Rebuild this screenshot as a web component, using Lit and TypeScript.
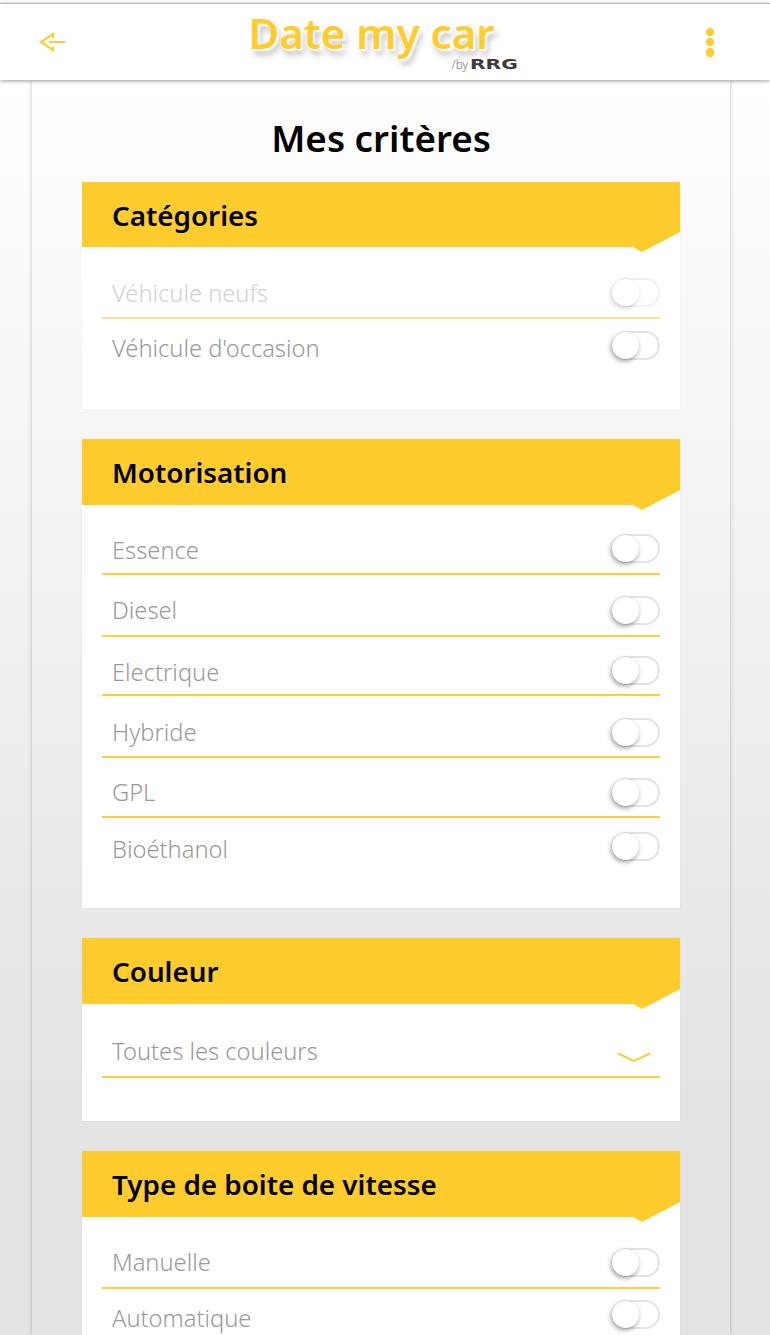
import { LitElement, html, css } from "lit";
import { customElement } from "lit/decorators.js";

// h: row height, t: space above the label, s: space above the switch
type Row = { label: string; faded?: boolean; h: number; t: number; s: number };
type Card = { title: string; head: number; rows: Row[] };
const cards: Card[] = [
  { title: "Catégories", head: 65, rows: [
    { label: "Véhicule neufs", faded: true, h: 72, t: 30, s: 31 },
    { label: "Véhicule d'occasion", h: 90, t: 13, s: 12 },
  ] },
  { title: "Motorisation", head: 66, rows: [
    { label: "Essence", h: 70, t: 29, s: 29 },
    { label: "Diesel", h: 62, t: 19, s: 21 },
    { label: "Electrique", h: 59, t: 19, s: 19 },
    { label: "Hybride", h: 62, t: 20, s: 22 },
    { label: "GPL", h: 60, t: 18, s: 20 },
    { label: "Bioéthanol", h: 90, t: 15, s: 14 },
  ] },
  { title: "Type de boite de vitesse", head: 66, rows: [
    { label: "Manuelle", h: 72, t: 29, s: 31 },
    { label: "Automatique", h: 90, t: 13, s: 11 },
  ] },
];

@customElement("app-root")
export class AppRoot extends LitElement {
  static styles = css`
    :host { display: block; height: 1335px; overflow: hidden; font-family: "Noto Sans", sans-serif;
      background: linear-gradient(#fff 80px, #e4e4e4 1100px); }
    .cap { height: 3px; background: #fff; position: relative; z-index: 2; }
    .top { height: 77px; box-sizing: border-box; background: #fff; border-top: 1px solid #b5b5b5;
      box-shadow: 0 1px 4px rgba(0,0,0,.4);
      display: flex; align-items: center; justify-content: space-between; padding: 0 55px 0 38px; position: relative; z-index: 2; }
    .logo { position: relative; width: 270px; height: 76px; margin-right: 28px; }
    .logo b { position: absolute; left: 0; right: 0; top: 6px; text-align: center; font-size: 42px; font-weight: 600; line-height: 46px; color: #ffcc2e;
      text-shadow: 0 0 2px #fff, 1px 1px 1px #fff, 2px 2px 2px #fff, 3px 6px 6px rgba(0,0,0,.28); white-space: nowrap; }
    .by { position: absolute; left: 215px; top: 53px; height: 16px; font-size: 12px; line-height: 16px; font-weight: 300; color: #777; white-space: nowrap; }
    .rrg { position: absolute; left: 233.500px; top: 51px; font-family: "DejaVu Sans", sans-serif; font-weight: 700; font-size: 13.500px; line-height: 18px; color: #3c3c3c; transform: scaleX(1.5); transform-origin: left; }
    .dots { width: 10px; height: 29px; display: flex; flex-direction: column; justify-content: space-between; align-items: center; }
    .dots span { width: 8.500px; height: 8.500px; border-radius: 50%; background: #ffcc2e; }
    .wrap { width: 698px; margin-left: 32px; height: 1255px; box-sizing: border-box; box-shadow: 0 0 4px rgba(0,0,0,.25); padding: 0 50px; }
    h1 { margin: 0; height: 102px; box-sizing: border-box; padding-top: 33px; text-align: center; font-size: 36.800px; line-height: 50px; font-weight: 600; color: #000; }
    .card { background: #fff; margin-bottom: 30px; box-shadow: 0 0 2px rgba(0,0,0,.07); }
    .head { position: relative; }
    .head svg { position: absolute; left: 0; top: 0; width: 598px; height: 71px; }
    .head span { position: absolute; left: 30px; top: 13px; font-size: 27.800px; line-height: 40px; font-weight: 600; color: #000; white-space: nowrap; }
    .row { box-sizing: border-box; margin: 0 20px; padding: 0 10px; position: relative; color: #999; font-size: 23.700px; font-weight: 300; }
    .row.line { border-bottom: 2px solid #ffcf38; }
    .row.faded { color: #d2d2d2; border-bottom-color: #ffe28c; }
    .lab { display: block; line-height: 32px; }
    .sw { position: absolute; right: 0; width: 48px; height: 29px; box-sizing: border-box; border: 2px solid #e4e4e4; border-radius: 15px; }
    .sw::before { content: ""; position: absolute; left: -2px; top: -1px; width: 27px; height: 27px; border-radius: 50%; background: #fff; box-shadow: -1px 2px 5px rgba(0,0,0,.4); }
    .faded .sw { border-color: #f0f0f0; }
    .faded .sw::before { box-shadow: -1px 2px 5px rgba(0,0,0,.2); }
    .chev { position: absolute; right: 9px; top: 48px; }
    .tail { height: 43px; }
  `;

  chevron() {
    return html`<svg class="chev" width="34" height="11" viewBox="0 0 34 11"><path d="M1 1.500l16 7.500 16-7.500" fill="none" stroke="#ffcc2e" stroke-width="2"/></svg>`;
  }

  head(t: string, h: number) {
    return html`<div class="head" style="height:${h}px"><svg viewBox="0 0 598 71"><polygon points="0,0 598,0 598,${h - 15} 560,${h + 5} 551,${h} 0,${h}" fill="#ffcc2e"/></svg><span>${t}</span></div>`;
  }

  card(c: Card) {
    return html`<section class="card">${this.head(c.title, c.head)}
      ${c.rows.map((r, i) => {
        const last = i === c.rows.length - 1;
        return html`<div class="row ${last ? "" : "line"} ${r.faded ? "faded" : ""}" style="height:${r.h}px;padding-top:${r.t}px">
          <span class="lab">${r.label}</span><span class="sw" style="top:${r.s}px"></span></div>`;
      })}
    </section>`;
  }

  render() {
    return html`<div class="cap"></div>
      <header class="top">
        <svg width="28" height="22" viewBox="0 0 28 22"><path d="M15 7V3L3 11l12 8v-3M11 11h16" fill="none" stroke="#ffcc2e" stroke-width="2.200"/></svg>
        <div class="logo"><b>Date my car</b><span class="by">/by</span><span class="rrg">RRG</span></div>
        <div class="dots"><span></span><span></span><span></span></div>
      </header>
      <div class="wrap">
        <h1>Mes critères</h1>
        ${this.card(cards[0])}
        ${this.card(cards[1])}
        <section class="card">${this.head("Couleur", 66)}
          <div class="row line" style="height:74px;padding-top:31px"><span class="lab">Toutes les couleurs</span>${this.chevron()}</div>
          <div class="tail"></div>
        </section>
        ${this.card(cards[2])}
      </div>`;
  }
}
